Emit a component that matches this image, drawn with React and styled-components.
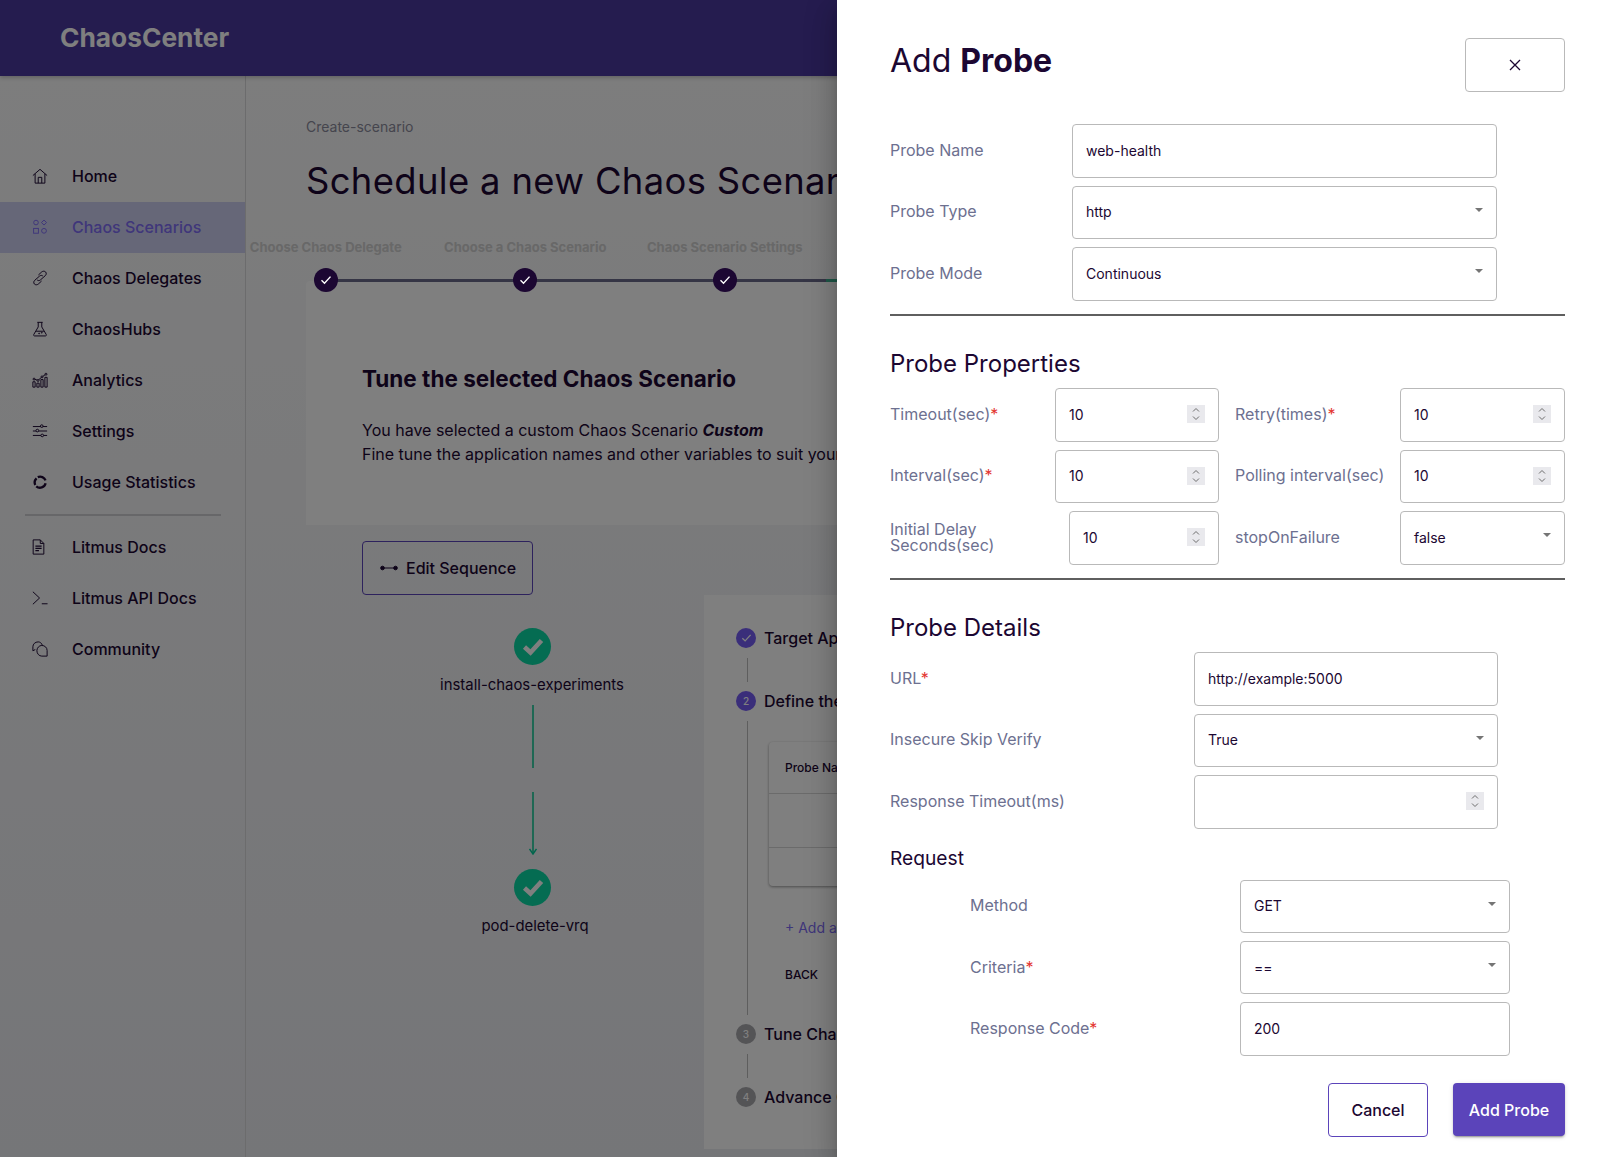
import React from "react";
import styled, { createGlobalStyle } from "styled-components";

const GlobalStyle = createGlobalStyle`
  html, body {
    margin: 0;
    padding: 0;
    background: #f5f6f8;
  }
  * {
    box-sizing: border-box;
  }
  body {
    font-family: Inter, "Liberation Sans", sans-serif;
    color: #1c0732;
  }
`;

const Stroke = ({ children, width = 16, height = 16, box = "0 0 18 18", weight = 1.1 }) => (
  <svg width={width} height={height} viewBox={box} fill="none" stroke="currentColor" strokeWidth={weight}>
    {children}
  </svg>
);

const HomeIcon = () => (
  <Stroke>
    <path d="M1 8.500L9 1.500l8 7M3.500 6.500v10.500h11V6.500" />
    <path d="M7 17v-6.500h4V17" />
  </Stroke>
);
const ScenariosIcon = () => (
  <Stroke>
    <circle cx="4.500" cy="4" r="2.600" />
    <path d="M13.500 1.200l2.900 2.800-2.900 2.800-2.900-2.800z" />
    <rect x="1.800" y="10.600" width="5.400" height="5.400" />
    <circle cx="13.500" cy="13.300" r="2.700" />
  </Stroke>
);
const DelegatesIcon = () => (
  <Stroke>
    <path d="M7.200 5.600l3.700-3.400c1.400-1.200 3.300-1.100 4.400 0 1.100 1.300.9 3-.4 4.200L9.700 11c-1.300 1.200-3 1.200-3.900.2" />
    <path d="M10.800 12.400l-3.700 3.400c-1.400 1.200-3.300 1.100-4.400 0-1.100-1.300-.9-3 .4-4.200L8.300 7c1.300-1.200 3-1.200 3.900-.2" />
  </Stroke>
);
const HubsIcon = () => (
  <Stroke>
    <path d="M6 1.500h6M7 1.500v5.200L2 15.200c-.5 1 .1 1.600 1 1.600h12c.9 0 1.500-.6 1-1.600l-5-8.500V1.500" />
    <path d="M4.600 11.500h8.800" />
    <circle cx="8" cy="14" r=".5" />
    <circle cx="11" cy="13.200" r=".5" />
  </Stroke>
);
const AnalyticsIcon = () => (
  <Stroke>
    <path d="M1 11h2.500v6H1zM5.500 12.500H8V17H5.500zM10 8.500h2.500V17H10zM14.500 6h2.500v11h-2.500z" />
    <circle cx="2.300" cy="8" r="1.100" />
    <circle cx="6.800" cy="9.500" r="1.100" />
    <circle cx="11.300" cy="5.500" r="1.100" />
    <circle cx="15.700" cy="2.500" r="1.100" />
    <path d="M3.300 8.300l2.500.8M7.600 8.700l2.900-2.500M12.200 4.900l2.600-1.800" />
  </Stroke>
);
const SettingsIcon = () => (
  <Stroke>
    <path d="M1 4h16M1 9h16M1 14h16" />
    <circle cx="11" cy="3.500" r="1.500" fill="#f5f6f8" />
    <circle cx="6" cy="8.500" r="1.500" fill="#f5f6f8" />
    <circle cx="11.500" cy="14" r="1.500" fill="#f5f6f8" />
  </Stroke>
);
const UsageIcon = () => (
  <Stroke weight={2.600}>
    <path d="M6.500 3.500a6.400 6.400 0 0 1 8.700 3.800" />
    <path d="M15.300 10.400a6.400 6.400 0 0 1-10.500 3.400" />
    <path d="M3.600 12.300a6.400 6.400 0 0 1 1.500-7.300" />
  </Stroke>
);
const DocsIcon = () => (
  <Stroke width={13} height={16} box="0 0 14 18">
    <path d="M1 1h8l4 4v12H1z" />
    <path d="M9 1v4h4" />
    <path d="M3.500 8h7M3.500 10.500h7M3.500 13h4" strokeWidth="1.400" />
  </Stroke>
);
const ApiIcon = () => (
  <Stroke>
    <path d="M1 2l7.500 7L1 16M11 15.500h6.500" />
  </Stroke>
);
const CommunityIcon = () => (
  <Stroke>
    <path d="M11.500 4.500C11 2.600 9 1 7 1 3.500 1 1 3.500 1 6.500V11l2.700-1.400" />
    <path d="M11 5c3.400 0 6 2.400 6 5.700V17h-6c-3 0-5.500-2.800-5.500-6S8 5 11 5z" />
  </Stroke>
);

const navTop = [
  { label: "Home", icon: <HomeIcon /> },
  { label: "Chaos Scenarios", icon: <ScenariosIcon />, active: true },
  { label: "Chaos Delegates", icon: <DelegatesIcon /> },
  { label: "ChaosHubs", icon: <HubsIcon /> },
  { label: "Analytics", icon: <AnalyticsIcon /> },
  { label: "Settings", icon: <SettingsIcon /> },
  { label: "Usage Statistics", icon: <UsageIcon /> },
];
const navBottom = [
  { label: "Litmus Docs", icon: <DocsIcon /> },
  { label: "Litmus API Docs", icon: <ApiIcon /> },
  { label: "Community", icon: <CommunityIcon /> },
];
const steps = ["Choose Chaos Delegate", "Choose a Chaos Scenario", "Chaos Scenario Settings"];

const SmallCheck = () => (
  <svg width="12" height="10" viewBox="0 0 12 10" fill="none" stroke="#fff" strokeWidth="1.400">
    <path d="M1.500 5.200l3 3 6-6.600" />
  </svg>
);
const NodeCheck = () => (
  <svg width="22" height="18" viewBox="0 0 22 18" fill="none" stroke="#fff" strokeWidth="4.600">
    <path d="M2.500 9l6 5.500L19.500 2.500" />
  </svg>
);
const CloseIcon = () => (
  <svg width="12" height="12" viewBox="0 0 12 12" fill="none" stroke="#1c0732" strokeWidth="1.300">
    <path d="M1 1l10 10M11 1L1 11" />
  </svg>
);
const SequenceIcon = () => (
  <svg width="18" height="6" viewBox="0 0 18 6" fill="#1c0732" stroke="#1c0732" strokeWidth="1">
    <circle cx="2.500" cy="3" r="1.800" />
    <circle cx="15.500" cy="3" r="1.800" />
    <path d="M3 3h12" />
  </svg>
);
const DropArrow = () => (
  <ArrowBox>
    <svg width="8" height="4" viewBox="0 0 8 4" fill="#757575">
      <path d="M0 0h8L4 4z" />
    </svg>
  </ArrowBox>
);
const Spinner = () => (
  <SpinnerBox>
    <svg width="8" height="14" viewBox="0 0 8 14" fill="none" stroke="#6d6d6d" strokeWidth="1">
      <path d="M1 4.500L4 1.500l3 3M1 9.500l3 3 3-3" />
    </svg>
  </SpinnerBox>
);

const TextField = ({ value = "" }) => <FieldInput type="text" defaultValue={value} readOnly />;
const NumberField = ({ value, width }) => (
  <FieldBox $width={width}>
    {value}
    <Spinner />
  </FieldBox>
);
const SelectField = ({ value, width }) => (
  <FieldBox $width={width}>
    {value}
    <DropArrow />
  </FieldBox>
);
const Req = () => <Star>*</Star>;

const App = () => {
  return (
    <Page>
      <GlobalStyle />
      <Header>
        <Logo>ChaosCenter</Logo>
      </Header>
      <Body>
        <Sidebar>
          {navTop.map(item => (
            <NavItem key={item.label} $active={item.active}>
              <NavIcon>{item.icon}</NavIcon>
              {item.label}
            </NavItem>
          ))}
          <NavDivider />
          {navBottom.map(item => (
            <NavItem key={item.label}>
              <NavIcon>{item.icon}</NavIcon>
              {item.label}
            </NavItem>
          ))}
        </Sidebar>
        <Main>
          <Breadcrumb>Create-scenario</Breadcrumb>
          <PageTitle>Schedule a new Chaos Scenario</PageTitle>
          <Stepper>
            {steps.map(step => (
              <Step key={step}>
                <StepLabel>{step}</StepLabel>
                <StepDot>
                  <SmallCheck />
                </StepDot>
              </Step>
            ))}
            <LastLine />
          </Stepper>
          <Card>
            <CardTitle>Tune the selected Chaos Scenario</CardTitle>
            <CardText>
              You have selected a custom Chaos Scenario <b><i>Custom</i></b>
              <br />
              Fine tune the application names and other variables to suit your needs
            </CardText>
          </Card>
          <Lower>
            <GraphColumn>
              <EditButton>
                <SequenceIcon />
                Edit Sequence
              </EditButton>
              <Graph>
                <GraphNode>
                  <NodeCheck />
                </GraphNode>
                <NodeLabel>install-chaos-experiments</NodeLabel>
                <GraphLine $top={10} $height={63} />
                <GraphLine $top={24} $height={62} />
                <GraphArrow>
                  <svg width="8" height="7" viewBox="0 0 8 7" fill="none" stroke="#00cc9a" strokeWidth="1.500">
                    <path d="M.5 1L4 6l3.500-5" />
                  </svg>
                </GraphArrow>
                <GraphNode $top={15}>
                  <NodeCheck />
                </GraphNode>
                <NodeLabel $shift={3} $gap={10}>pod-delete-vrq</NodeLabel>
              </Graph>
            </GraphColumn>
            <TunePanel>
              <TuneStep>
                <TuneDot $on><SmallCheck /></TuneDot>
                Target Application
              </TuneStep>
              <TuneLine $height={24} />
              <TuneStep>
                <TuneDot $on>2</TuneDot>
                Define the steady state for this workflow
              </TuneStep>
              <TuneBody>
                <ProbeTable>
                  <ProbeHead>Probe Name</ProbeHead>
                  <ProbeRow />
                </ProbeTable>
                <AddLink>+ Add a new Probe</AddLink>
                <BackLink>BACK</BackLink>
              </TuneBody>
              <TuneStep>
                <TuneDot>3</TuneDot>
                Tune Chaos Experiments
              </TuneStep>
              <TuneLine $height={24} />
              <TuneStep>
                <TuneDot>4</TuneDot>
                Advance Options
              </TuneStep>
            </TunePanel>
          </Lower>
        </Main>
      </Body>

      <Overlay />

      <Drawer>
        <DrawerHead>
          <DrawerTitle>Add <strong>Probe</strong></DrawerTitle>
          <CloseButton><CloseIcon /></CloseButton>
        </DrawerHead>

        <Rows>
          <Row $label={182} $field={425}><FieldLabel>Probe Name</FieldLabel><TextField value="web-health" /></Row>
          <Row $label={182} $field={425}><FieldLabel>Probe Type</FieldLabel><SelectField value="http" /></Row>
          <Row $label={182} $field={425}><FieldLabel>Probe Mode</FieldLabel><SelectField value="Continuous" /></Row>
        </Rows>
        <Rule />

        <SectionTitle>Probe Properties</SectionTitle>
        <PropsGrid>
          <PropCell><FieldLabel>Timeout(sec)<Req /></FieldLabel><NumberField value="10" width={164} /></PropCell>
          <PropCell><FieldLabel>Retry(times)<Req /></FieldLabel><NumberField value="10" width={165} /></PropCell>
          <PropCell><FieldLabel>Interval(sec)<Req /></FieldLabel><NumberField value="10" width={164} /></PropCell>
          <PropCell><FieldLabel>Polling interval(sec)</FieldLabel><NumberField value="10" width={165} /></PropCell>
          <PropCell><FieldLabel $tight>Initial Delay Seconds(sec)</FieldLabel><NumberField value="10" width={150} /></PropCell>
          <PropCell><FieldLabel>stopOnFailure</FieldLabel><SelectField value="false" width={165} /></PropCell>
        </PropsGrid>
        <Rule />

        <SectionTitle>Probe Details</SectionTitle>
        <Rows>
          <Row $label={304} $field={304}><FieldLabel>URL<Req /></FieldLabel><TextField value="http://example:5000" /></Row>
          <Row $label={304} $field={304}><FieldLabel>Insecure Skip Verify</FieldLabel><SelectField value="True" /></Row>
          <Row $label={304} $field={304}><FieldLabel>Response Timeout(ms)</FieldLabel><NumberField /></Row>
        </Rows>

        <SubTitle>Request</SubTitle>
        <Rows $indent={80} $gap={7.800}>
          <Row $label={270} $field={270}><FieldLabel>Method</FieldLabel><SelectField value="GET" /></Row>
          <Row $label={270} $field={270}><FieldLabel>Criteria<Req /></FieldLabel><SelectField value="==" /></Row>
          <Row $label={270} $field={270}><FieldLabel>Response Code<Req /></FieldLabel><TextField value="200" /></Row>
        </Rows>

        <Actions>
          <CancelButton>Cancel</CancelButton>
          <SubmitButton>Add Probe</SubmitButton>
        </Actions>
      </Drawer>
    </Page>
  );
};

const Page = styled.div`
  position: relative;
  width: 1615px;
  height: 1157px;
  overflow: hidden;
  background: linear-gradient(#fbfbfb, #ebecf1);
`;

const Header = styled.header`
  height: 76px;
  display: flex;
  align-items: center;
  padding-left: 60px;
  background: #4a399f;
  box-shadow: 0 2px 4px rgba(0, 0, 0, 0.2);
  position: relative;
`;
const Logo = styled.div`
  font-size: 26.300px;
  font-weight: 700;
  color: #fff;
  margin-top: -1px;
`;

const Body = styled.div`
  display: flex;
  height: 1081px;
`;

const Sidebar = styled.nav`
  flex: 0 0 246px;
  padding-top: 75px;
  border-right: 1px solid #d8d8da;
`;
const NavItem = styled.div`
  height: 51px;
  padding-bottom: 2px;
  display: flex;
  align-items: center;
  font-size: 16px;
  font-weight: 500;
  color: ${p => (p.$active ? "#7e6cf5" : "#1c0732")};
  background: ${p => (p.$active ? "#cdcff0" : "transparent")};
`;
const NavIcon = styled.span`
  flex: 0 0 72px;
  padding-left: 32px;
  display: flex;
  align-items: center;
`;
const NavDivider = styled.div`
  height: 2px;
  margin: 6px 24px 6px 25px;
  background: #cfcfd2;
`;

const Main = styled.main`
  flex: 0 0 592px;
  min-width: 0;
  overflow: hidden;
  padding-top: 41px;
`;
const Breadcrumb = styled.div`
  margin-left: 60px;
  font-size: 14px;
  line-height: 20px;
  color: #8b8b9c;
`;
const PageTitle = styled.h1`
  margin: 22px 0 0 60px;
  font-size: 36.400px;
  line-height: 44px;
  font-weight: 400;
  white-space: nowrap;
  letter-spacing: 0.35px;
`;

const Stepper = styled.div`
  display: flex;
  position: relative;
  margin: 36px 0 -11px -20px;
  width: 900px;
`;
const Step = styled.div`
  flex: 0 0 199.500px;
  display: flex;
  flex-direction: column;
  align-items: center;
  position: relative;
  &::after {
    content: "";
    position: absolute;
    left: 50%;
    width: 100%;
    bottom: 10.500px;
    height: 3px;
    background: #6a6a8a;
  }
`;
const LastLine = styled.div`
  position: absolute;
  left: 600px;
  bottom: 10.500px;
  width: 300px;
  height: 3px;
  background: #3fae8f;
`;
const StepLabel = styled.div`
  font-size: 13px;
  line-height: 16px;
  font-weight: 700;
  color: #d0d0d0;
  white-space: nowrap;
`;
const StepDot = styled.div`
  width: 24px;
  height: 24px;
  margin-top: 13px;
  border-radius: 50%;
  background: #1c0732;
  display: flex;
  align-items: center;
  justify-content: center;
  position: relative;
  z-index: 1;
`;

const Card = styled.section`
  margin-left: 60px;
  width: 900px;
  height: 244px;
  padding: 80px 0 0 56px;
  background: #fff;
  border-radius: 4px 0 0 0;
`;
const CardTitle = styled.h2`
  margin: 0;
  font-size: 22.500px;
  line-height: 36px;
  font-weight: 700;
`;
const CardText = styled.p`
  margin: 20.500px 0 0;
  font-size: 16px;
  line-height: 24px;
  white-space: nowrap;
`;

const Lower = styled.div`
  display: flex;
  padding: 16px 0 0 116px;
`;
const GraphColumn = styled.div`
  flex: 0 0 342px;
`;
const EditButton = styled.div`
  width: 171px;
  height: 54px;
  padding: 0 0 1px 17px;
  border: 1px solid #5b44ba;
  border-radius: 4px;
  display: flex;
  align-items: center;
  gap: 8px;
  font-size: 16px;
  font-weight: 500;
`;
const Graph = styled.div`
  width: 342px;
  margin-left: -2px;
  display: flex;
  flex-direction: column;
`;
const GraphNode = styled.div`
  width: 37px;
  height: 37px;
  margin: ${p => p.$top || 33}px 0 0 154px;
  border-radius: 50%;
  background: #0bd8a4;
  display: flex;
  align-items: center;
  justify-content: center;
`;
const NodeLabel = styled.div`
  width: 190px;
  margin: ${p => p.$gap || 10}px 0 0 ${p => 77 + (p.$shift || 0)}px;
  text-align: center;
  font-size: 14.900px;
  line-height: 20px;
  white-space: nowrap;
`;
const GraphLine = styled.div`
  width: 2px;
  height: ${p => p.$height}px;
  margin: ${p => p.$top}px 0 0 172px;
  background: #3fd0a8;
`;
const GraphArrow = styled.div`
  height: 0;
  margin-left: 169px;
  svg {
    display: block;
    margin-top: -6px;
  }
`;

const TunePanel = styled.section`
  flex: 0 0 500px;
  height: 554px;
  margin-top: 54px;
  padding: 33px 0 0 32px;
  background: #fff;
`;
const TuneStep = styled.div`
  height: 20px;
  display: flex;
  align-items: center;
  gap: 8px;
  font-size: 16px;
  font-weight: 500;
  white-space: nowrap;
`;
const TuneDot = styled.div`
  width: 20px;
  height: 20px;
  border-radius: 50%;
  background: ${p => (p.$on ? "#755cf5" : "#a8a8ad")};
  color: #fff;
  font-size: 10px;
  display: flex;
  align-items: center;
  justify-content: center;
  svg {
    width: 11px;
  }
`;
const TuneLine = styled.div`
  width: 1px;
  height: ${p => p.$height}px;
  margin: 10px 0 9px 11px;
  background: #bdbdbd;
`;
const TuneBody = styled.div`
  margin: 10px 0 9px 11px;
  height: 294px;
  padding: 21px 0 0 21px;
  border-left: 1px solid #bdbdbd;
`;
const ProbeTable = styled.div`
  width: 420px;
  height: 144px;
  background: #fff;
  border-radius: 4px;
  box-shadow: 0 1px 3px rgba(0, 0, 0, 0.4);
`;
const ProbeHead = styled.div`
  height: 52px;
  padding-left: 16px;
  display: flex;
  align-items: center;
  font-size: 12px;
  font-weight: 500;
  border-bottom: 1px solid #d6d6d6;
`;
const ProbeRow = styled.div`
  height: 54px;
  border-bottom: 1px solid #d6d6d6;
`;
const AddLink = styled.div`
  margin: 32px 0 0 16px;
  font-size: 14px;
  line-height: 20px;
  color: #7e6cf5;
`;
const BackLink = styled.div`
  margin: 29px 0 0 16px;
  font-size: 12px;
  line-height: 16px;
  font-weight: 500;
`;

const Overlay = styled.div`
  position: absolute;
  inset: 0;
  background: rgba(0, 0, 0, 0.5);
`;

const Drawer = styled.aside`
  position: absolute;
  top: 0;
  right: 0;
  bottom: 0;
  width: 778px;
  padding: 38px 50px 0 53px;
  background: #fff;
  box-shadow: 0 8px 10px -5px rgba(0, 0, 0, 0.2), 0 16px 24px 2px rgba(0, 0, 0, 0.14), 0 6px 30px 5px rgba(0, 0, 0, 0.12);
`;
const DrawerHead = styled.div`
  display: flex;
  justify-content: space-between;
  height: 54px;
  margin-bottom: 32px;
`;
const DrawerTitle = styled.h1`
  margin: 1px 0 0;
  font-size: 32px;
  line-height: 44px;
  font-weight: 400;
  strong {
    font-weight: 700;
  }
`;
const CloseButton = styled.div`
  width: 100px;
  height: 54px;
  border: 1px solid #b9b9b9;
  border-radius: 4px;
  display: flex;
  align-items: center;
  justify-content: center;
`;

const Rows = styled.div`
  display: flex;
  flex-direction: column;
  gap: ${p => p.$gap || 8}px;
  padding-left: ${p => p.$indent || 0}px;
`;
const Row = styled.div`
  display: grid;
  grid-template-columns: ${p => p.$label}px ${p => p.$field}px;
  align-items: center;
`;
const FieldLabel = styled.div`
  font-size: 16px;
  line-height: ${p => (p.$tight ? "16px" : "24px")};
  color: #6d7090;
  width: ${p => (p.$tight ? "130px" : "auto")};
  margin-bottom: 2px;
`;
const Star = styled.span`
  color: #e3342f;
`;
const fieldBase = `
  height: 53.500px;
  border: 1px solid #b9b9b9;
  border-radius: 4px;
  background: #fff;
  font-family: Inter, "Liberation Sans", sans-serif;
  font-size: 14px;
  color: #1c0732;
`;
const FieldInput = styled.input`
  ${fieldBase}
  width: 100%;
  padding: 0 13px;
  outline: none;
`;
const FieldBox = styled.div`
  ${fieldBase}
  width: ${p => (p.$width ? `${p.$width}px` : "100%")};
  padding: 0 13px 1px;
  display: flex;
  align-items: center;
  justify-content: space-between;
`;
const ArrowBox = styled.span`
  display: flex;
  margin: -4px 0 0 auto;
`;
const SpinnerBox = styled.span`
  width: 18px;
  height: 18px;
  margin-left: auto;
  background: #e9e9ed;
  display: flex;
  align-items: center;
  justify-content: center;
`;

const Rule = styled.hr`
  margin: 13.500px 0 0;
  height: 2px;
  border: 0;
  background: #5f5f5f;
`;
const SectionTitle = styled.h2`
  margin: 33px 0 9px;
  font-size: 24px;
  line-height: 30px;
  font-weight: 400;
`;
const SubTitle = styled.h3`
  margin: 16px 0 9px;
  font-size: 19.200px;
  line-height: 26px;
  font-weight: 400;
`;
const PropsGrid = styled.div`
  display: grid;
  grid-template-columns: 329px 330px;
  column-gap: 16px;
  row-gap: 8px;
`;
const PropCell = styled.div`
  display: flex;
  align-items: center;
  justify-content: space-between;
`;

const Actions = styled.div`
  display: flex;
  justify-content: flex-end;
  align-items: flex-start;
  gap: 25px;
  margin-top: 27.600px;
`;
const CancelButton = styled.div`
  width: 100px;
  height: 54px;
  border: 1px solid #5b44ba;
  border-radius: 4px;
  display: flex;
  align-items: center;
  justify-content: center;
  font-size: 16px;
  font-weight: 500;
`;
const SubmitButton = styled.div`
  width: 112px;
  height: 53px;
  border-radius: 4px;
  background: #5b44ba;
  color: #fff;
  display: flex;
  align-items: center;
  justify-content: center;
  font-size: 16px;
  font-weight: 500;
  box-shadow: 0 3px 1px -2px rgba(0, 0, 0, 0.2), 0 2px 2px rgba(0, 0, 0, 0.14), 0 1px 5px rgba(0, 0, 0, 0.12);
`;

export default App;
